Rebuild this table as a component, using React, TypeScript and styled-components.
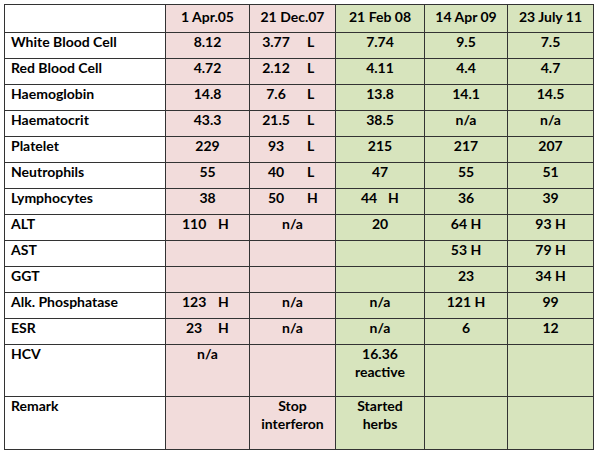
import styled, { createGlobalStyle } from 'styled-components';

type Tone = 'white' | 'pink' | 'green';
type Flagged = { v: string; flag: 'L' | 'H' };
type Value = string | Flagged;

const GlobalStyle = createGlobalStyle`
  body {
    margin: 0;
    background: #ffffff;
    font-family: Lato, "Open Sans", sans-serif;
  }
`;

const tones: Record<Tone, string> = {
  white: '#ffffff',
  pink: '#f2dcdb',
  green: '#d7e4bd',
};

const columnTones: Tone[] = ['white', 'pink', 'pink', 'green', 'green', 'green'];

// where the value box and the L/H flag sit in each date column
const flagLayout = [
  { pad: 16, width: 24, gap: 12 },
  { pad: 12, width: 28, gap: 17 },
  { pad: 25, width: 16, gap: 11 },
  { pad: 20, width: 24, gap: 10 },
  { pad: 20, width: 24, gap: 10 },
];

const dates = ['1 Apr.05', '21 Dec.07', '21 Feb 08', '14 Apr 09', '23 July 11'];

const f = (v: string, flag: 'L' | 'H'): Flagged => ({ v, flag });

const rows: { label: string; values: Value[] }[] = [
  { label: 'White Blood Cell', values: ['8.12', f('3.77', 'L'), '7.74', '9.5', '7.5'] },
  { label: 'Red Blood Cell', values: ['4.72', f('2.12', 'L'), '4.11', '4.4', '4.7'] },
  { label: 'Haemoglobin', values: ['14.8', f('7.6', 'L'), '13.8', '14.1', '14.5'] },
  { label: 'Haematocrit', values: ['43.3', f('21.5', 'L'), '38.5', 'n/a', 'n/a'] },
  { label: 'Platelet', values: ['229', f('93', 'L'), '215', '217', '207'] },
  { label: 'Neutrophils', values: ['55', f('40', 'L'), '47', '55', '51'] },
  { label: 'Lymphocytes', values: ['38', f('50', 'H'), f('44', 'H'), '36', '39'] },
  { label: 'ALT', values: [f('110', 'H'), 'n/a', '20', '64 H', '93 H'] },
  { label: 'AST', values: ['', '', '', '53 H', '79 H'] },
  { label: 'GGT', values: ['', '', '', '23', '34 H'] },
  { label: 'Alk. Phosphatase', values: [f('123', 'H'), 'n/a', 'n/a', '121 H', '99'] },
  { label: 'ESR', values: [f('23', 'H'), 'n/a', 'n/a', '6', '12'] },
  { label: 'HCV', values: ['n/a', '', '16.36\nreactive', '', ''] },
  { label: 'Remark', values: ['', 'Stop\ninterferon', 'Started\nherbs', '', ''] },
];

const Sheet = styled.div`
  display: grid;
  grid-template-columns: 161px 84px 86px 89px 83px 86px;
  grid-template-rows: 28px repeat(12, 26px) 52px 53px;
  width: max-content;
  margin: 4px 0 0 4px;
  border-top: 1px solid #333333;
  border-left: 1px solid #333333;
  color: #000000;
  font-size: 14px;
  font-weight: 700;
  line-height: 18px;
`;

const Cell = styled.div<{ $tone: Tone; $align?: 'left' | 'center'; $head?: boolean }>`
  box-sizing: border-box;
  border-right: 1px solid #333333;
  border-bottom: 1px solid #333333;
  background: ${(p) => tones[p.$tone]};
  text-align: ${(p) => p.$align ?? 'center'};
  padding: ${(p) => (p.$head ? '3px' : '0')} 6px 0;
  white-space: pre-line;
`;

const FlagCell = styled(Cell)<{ $pad: number }>`
  text-align: left;
  padding-left: ${(p) => p.$pad}px;
  padding-right: 0;
`;

const FlagValue = styled.span<{ $width: number }>`
  display: inline-block;
  width: ${(p) => p.$width}px;
  text-align: center;
`;

const Flag = styled.span<{ $gap: number }>`
  display: inline-block;
  margin-left: ${(p) => p.$gap}px;
`;

const App = () => {
  return (
    <>
      <GlobalStyle />
      <Sheet>
        <Cell $tone="white" $head />
        {dates.map((d, i) => (
          <Cell key={d} $tone={columnTones[i + 1]} $head>
            {d}
          </Cell>
        ))}
        {rows.map((row) => [
          <Cell key={row.label} $tone="white" $align="left">
            {row.label}
          </Cell>,
          ...row.values.map((val, i) => {
            const tone = columnTones[i + 1];
            const key = `${row.label}-${i}`;
            if (typeof val === 'string') {
              return (
                <Cell key={key} $tone={tone}>
                  {val}
                </Cell>
              );
            }
            const lay = flagLayout[i];
            return (
              <FlagCell key={key} $tone={tone} $pad={lay.pad}>
                <FlagValue $width={lay.width}>{val.v}</FlagValue>
                <Flag $gap={lay.gap}>{val.flag}</Flag>
              </FlagCell>
            );
          }),
        ])}
      </Sheet>
    </>
  );
};

export default App;
